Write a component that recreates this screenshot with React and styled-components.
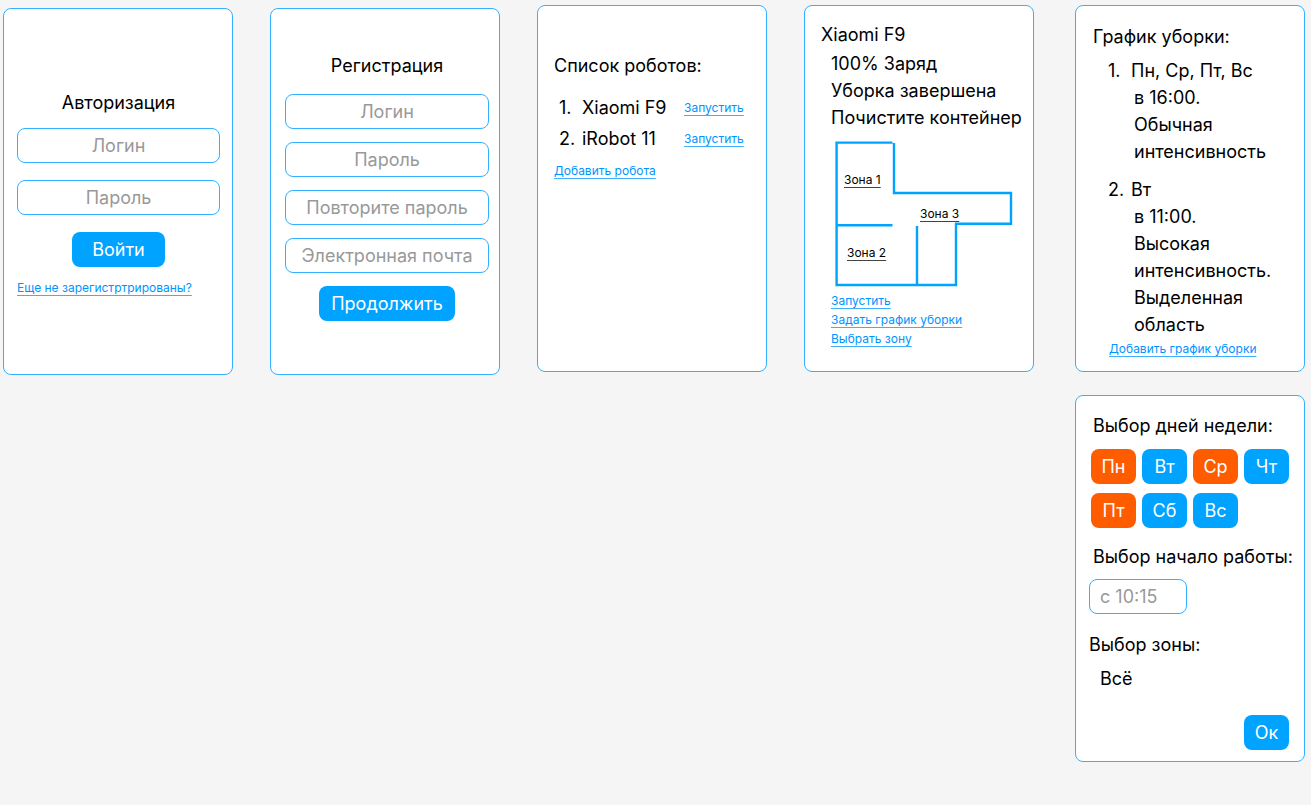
import React from "react";
import styled, { createGlobalStyle } from "styled-components";

const GlobalStyle = createGlobalStyle`
  *, *::before, *::after { box-sizing: border-box; }
  body {
    margin: 0;
    background: #f5f5f5;
    color: #000;
    font: 400 18px/27px Inter, "Noto Sans", sans-serif;
  }
  button, input { font: inherit; }
`;

const Board = styled.main`
  display: flex;
  align-items: flex-start;
  gap: 41px;
  padding: 5px 6px 5px 3px;
`;

const Screens = styled.div`
  flex: 1031 1 0;
  display: flex;
  align-items: flex-start;
  gap: 37px;
`;

const ScheduleColumn = styled.div`
  flex: 230 1 0;
  min-width: 230px;
  display: flex;
  flex-direction: column;
  gap: 23px;
`;

const ScreenPair = styled.div`
  flex: 1 1 0;
  display: grid;
  grid-template-columns: repeat(2, minmax(230px, 1fr));
  gap: 37px;
  padding-top: ${(p) => p.$top || "0"};
`;

const Card = styled.section`
  min-height: 367px;
  display: flex;
  flex-direction: column;
  padding: ${(p) => p.$pad};
  border: 1px solid #33b1ff;
  border-radius: 8px;
  background: #fff;
`;

const FormCard = styled(Card).attrs({ as: "form" })``;

const Title = styled.h2`
  margin: 0;
  font-size: 18px;
  font-weight: 400;
  line-height: 27px;
  white-space: nowrap;
  text-align: ${(p) => (p.$center ? "center" : "left")};
`;

const Fields = styled.div`
  display: flex;
  flex-direction: column;
  align-items: center;
  gap: ${(p) => p.$gap};
  margin: ${(p) => p.$margin};
`;

const TextField = styled.input`
  width: ${(p) => p.$width || "100%"};
  height: 35px;
  padding: 0 10px;
  border: 1px solid #33b1ff;
  border-radius: 8px;
  background: #fff;
  color: #000;
  text-align: ${(p) => (p.$width ? "left" : "center")};
  &::placeholder { color: #999; opacity: 1; }
`;

const Button = styled.button`
  height: 35px;
  min-width: 45px;
  padding: 0 ${(p) => p.$padX || "0"};
  border: 0;
  border-radius: 8px;
  background: ${(p) => (p.$active ? "#ff5c00" : "#00a3ff")};
  color: #fff;
  cursor: pointer;
`;

const SmallLink = styled.a`
  align-self: flex-start;
  color: ${(p) => (p.$dark ? "#000" : "#0094ff")};
  font-size: 12px;
  line-height: 19px;
  white-space: nowrap;
  text-decoration: underline;
  text-decoration-color: ${(p) => (p.$dark ? "#444" : "#40aeff")};
  text-decoration-thickness: 1px;
  text-decoration-skip-ink: none;
  text-underline-offset: 3px;
`;

const RobotList = styled.ol`
  display: flex;
  flex-direction: column;
  gap: 4px;
  margin: 15px 0 9px;
  padding: 0 0 0 5px;
  list-style: none;
`;

const RobotRow = styled.li`
  display: grid;
  grid-template-columns: 23px 102px auto;
  align-items: center;
`;

const RowAction = styled.span`
  display: flex;
`;

const Status = styled.div`
  display: flex;
  flex-direction: column;
  margin: 2px 0 11px;
  padding-left: 10px;
  white-space: nowrap;
`;

const FloorPlan = styled.div`
  position: relative;
  width: 177px;
  height: 145px;
  margin: 0 0 4px 14px;
`;

const Walls = styled.svg`
  display: block;
  overflow: visible;
`;

const ZoneLink = styled(SmallLink)`
  position: absolute;
  left: ${(p) => p.$x}px;
  top: ${(p) => p.$y}px;
`;

const Links = styled.nav`
  display: flex;
  flex-direction: column;
  padding-left: ${(p) => p.$indent};
`;

const ScheduleList = styled.ol`
  display: flex;
  flex-direction: column;
  gap: 11px;
  margin: 7px 0 1px;
  padding: 0 0 0 15px;
  list-style: none;
`;

const ScheduleItem = styled.li`
  display: grid;
  grid-template-columns: 23px auto;
`;

const Details = styled.div`
  grid-column: 2;
  padding-left: 3px;
`;

const Days = styled.div`
  display: grid;
  grid-template-columns: repeat(4, 45px);
  gap: 9px 6px;
  margin: 10px 0 15px;
  padding-left: 2px;
`;

const TimeLabel = styled.label`
  padding-left: 4px;
  white-space: nowrap;
`;

const Section = styled.div`
  display: flex;
  flex-direction: column;
  gap: ${(p) => p.$gap};
  margin: ${(p) => p.$margin || "0"};
  padding-left: ${(p) => p.$indent || "0"};
`;

const Value = styled.p`
  margin: 0;
  padding-left: 11px;
`;

const Footer = styled.div`
  display: flex;
  justify-content: flex-end;
`;

const stop = (e) => e.preventDefault();

const robots = ["Xiaomi F9", "iRobot 11"];

const schedule = [
  { days: "Пн, Ср, Пт, Вс", details: ["в 16:00.", "Обычная", "интенсивность"] },
  { days: "Вт", details: ["в 11:00.", "Высокая", "интенсивность.", "Выделенная", "область"] },
];

const weekDays = ["Пн", "Вт", "Ср", "Чт", "Пт", "Сб", "Вс"];

export default function App() {
  const [selected, setSelected] = React.useState(["Пн", "Ср", "Пт"]);
  const toggle = (day) =>
    setSelected((s) => (s.includes(day) ? s.filter((d) => d !== day) : [...s, day]));

  return (
    <>
      <GlobalStyle />
      <Board>
        <Screens>
          <ScreenPair $top="3px">
            <FormCard $pad="80px 12px 20px 13px" onSubmit={stop}>
              <Title $center>Авторизация</Title>
              <Fields $gap="17px" $margin="12px 0 11px">
                <TextField aria-label="Логин" placeholder="Логин" />
                <TextField aria-label="Пароль" type="password" placeholder="Пароль" />
                <Button $padX="20px">Войти</Button>
              </Fields>
              <SmallLink href="#register">Еще не зарегистртрированы?</SmallLink>
            </FormCard>
            <FormCard $pad="43px 10px 20px 14px" onSubmit={stop}>
              <Title $center>Регистрация</Title>
              <Fields $gap="13px" $margin="15px 0 0">
                <TextField aria-label="Логин" placeholder="Логин" />
                <TextField aria-label="Пароль" type="password" placeholder="Пароль" />
                <TextField aria-label="Повторите пароль" type="password" placeholder="Повторите пароль" />
                <TextField aria-label="Электронная почта" type="email" placeholder="Электронная почта" />
                <Button $padX="12px">Продолжить</Button>
              </Fields>
            </FormCard>
          </ScreenPair>
          <ScreenPair>
            <Card $pad="46px 16px 20px">
              <Title>Список роботов:</Title>
              <RobotList>
                {robots.map((name, i) => (
                  <RobotRow key={name}>
                    <span>{i + 1}.</span>
                    <span>{name}</span>
                    <RowAction>
                      <SmallLink href="#start">Запустить</SmallLink>
                    </RowAction>
                  </RobotRow>
                ))}
              </RobotList>
              <SmallLink href="#add">Добавить робота</SmallLink>
            </Card>
            <Card $pad="15px 8px 20px 16px">
              <Title>Xiaomi F9</Title>
              <Status>
                <span>100% Заряд</span>
                <span>Уборка завершена</span>
                <span>Почистите контейнер</span>
              </Status>
              <FloorPlan>
                <Walls width="177" height="145" viewBox="0 0 177 145" fill="none" stroke="#00a3ff" strokeWidth="2.4" aria-hidden="true">
                  <path d="M57.500 0.600H1.600V143H121V81.700H176V51H59V1" />
                  <path d="M1.600 83.200H57.500M82 84V143" />
                </Walls>
                <ZoneLink $dark $x={9} $y={28} href="#zone1">Зона 1</ZoneLink>
                <ZoneLink $dark $x={85} $y={62} href="#zone3">Зона 3</ZoneLink>
                <ZoneLink $dark $x={12} $y={101} href="#zone2">Зона 2</ZoneLink>
              </FloorPlan>
              <Links $indent="10px">
                <SmallLink href="#start">Запустить</SmallLink>
                <SmallLink href="#schedule">Задать график уборки</SmallLink>
                <SmallLink href="#zone">Выбрать зону</SmallLink>
              </Links>
            </Card>
          </ScreenPair>
        </Screens>
        <ScheduleColumn>
          <Card $pad="17px 12px 10px 17px">
            <Title>График уборки:</Title>
            <ScheduleList>
              {schedule.map((item, i) => (
                <ScheduleItem key={item.days}>
                  <span>{i + 1}.</span>
                  <span>{item.days}</span>
                  <Details>
                    {item.details.map((line) => (
                      <div key={line}>{line}</div>
                    ))}
                  </Details>
                </ScheduleItem>
              ))}
            </ScheduleList>
            <Links $indent="16px">
              <SmallLink href="#add-schedule">Добавить график уборки</SmallLink>
            </Links>
          </Card>
          <FormCard $pad="16px 15px 11px 13px" onSubmit={stop}>
            <Section $indent="4px">
              <Title>Выбор дней недели:</Title>
            </Section>
            <Days>
              {weekDays.map((day) => (
                <Button
                  key={day}
                  type="button"
                  $active={selected.includes(day)}
                  aria-pressed={selected.includes(day)}
                  onClick={() => toggle(day)}
                >
                  {day}
                </Button>
              ))}
            </Days>
            <Section $gap="9px">
              <TimeLabel htmlFor="start-time">Выбор начало работы:</TimeLabel>
              <TextField id="start-time" $width="98px" placeholder="с 10:15" />
            </Section>
            <Section $gap="7px" $margin="17px 0 23px">
              <Title>Выбор зоны:</Title>
              <Value>Всё</Value>
            </Section>
            <Footer>
              <Button>Ок</Button>
            </Footer>
          </FormCard>
        </ScheduleColumn>
      </Board>
    </>
  );
}
